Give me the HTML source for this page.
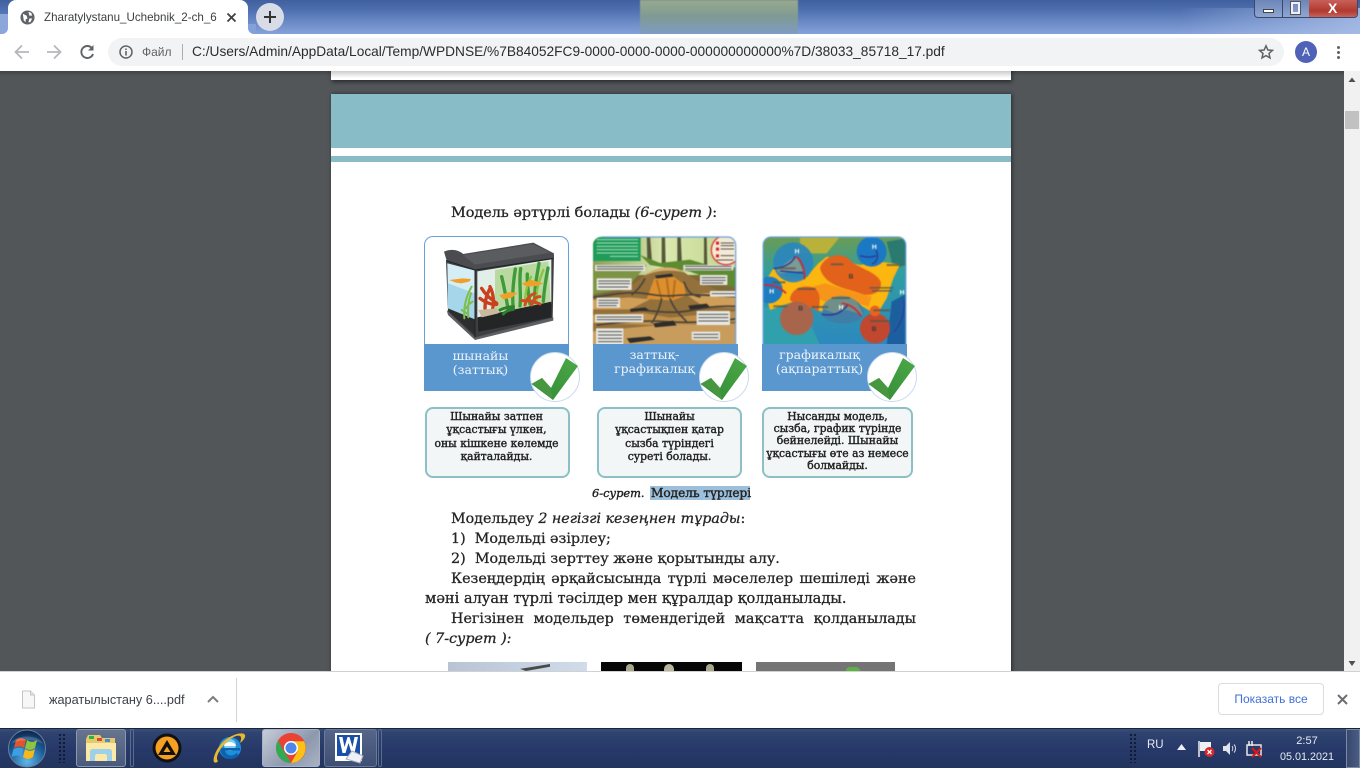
<!DOCTYPE html>
<html><head><meta charset="utf-8"><style>
html,body{margin:0;padding:0;width:1360px;height:768px;overflow:hidden;background:#525659}
*{box-sizing:border-box}
.a{position:absolute}
.b{font-family:"DejaVu Serif","Liberation Serif",serif;font-size:10.800px;color:#222;text-align:center;white-space:nowrap;position:absolute;line-height:12.200px;-webkit-text-stroke:.4px #222;filter:blur(.25px)}
.c{font-family:"DejaVu Serif","Liberation Serif",serif;font-size:12.500px;color:#eef4fa;text-align:center;position:absolute;line-height:14px;white-space:nowrap;filter:blur(.25px)}
.l{font-family:"DejaVu Serif","Liberation Serif",serif;font-size:14.300px;color:#252525;position:absolute;white-space:nowrap;line-height:18px;-webkit-text-stroke:.3px #252525;filter:blur(.25px)}
.u{font-family:"Liberation Sans",sans-serif;position:absolute;white-space:nowrap}
.box{position:absolute;background:#f3f6f6;border:2px solid #8bc0c6;border-radius:8px}
i{font-style:italic}
</style></head><body>
<!-- Frame -->
<div class="a" style="left:0;top:0;width:1360px;height:34px;background:linear-gradient(180deg,#3f5f9e 0,#4f70b0 30%,#86a2da 100%)"></div>
<div class="a" style="left:1180px;top:8px;width:180px;height:26px;background:linear-gradient(90deg,rgba(168,189,230,0),rgba(172,192,232,.8));"></div>
<div class="a" style="left:0;top:14px;width:12px;height:20px;background:#8aa6da"></div>
<div class="a" style="left:640px;top:0;width:158px;height:34px;background:linear-gradient(180deg,#97a98c 0,#7f9a94 50%,#7f9cc4 100%);filter:blur(.6px)"></div>
<!-- window buttons -->
<div class="a" style="left:1254px;top:0;width:104px;height:18px;border:1px solid #39496b;border-top:0;border-radius:0 0 4px 4px;background:linear-gradient(180deg,#6c86b8,#8fa6d2);overflow:hidden">
<div class="a" style="left:27px;top:0;width:1px;height:18px;background:#39496b"></div>
<div class="a" style="left:54px;top:0;width:49px;height:18px;background:linear-gradient(180deg,#c8605a,#b03a30 60%,#c96a60)"></div>
<div class="a" style="left:8px;top:9px;width:11px;height:4px;background:#fff;border:1px solid #444"></div>
<div class="a" style="left:36px;top:2px;width:9px;height:12px;background:none;border:2px solid #eef;outline:1px solid #555"></div>
<div class="u" style="left:73px;top:-1px;font-size:14px;font-weight:bold;color:#fff;line-height:18px">X</div>
</div>
<!-- Tab -->
<div class="a" style="left:2px;top:28px;width:252px;height:6px;background:#fff"></div>
<div class="a" style="left:0;top:24px;width:8px;height:10px;background:#8aa6da;border-radius:0 0 6px 0"></div>
<div class="a" style="left:248px;top:24px;width:8px;height:10px;background:#84a0d8;border-radius:0 0 0 6px"></div>
<div class="a" style="left:8px;top:0;width:240px;height:34px;background:#fff;border-radius:8px 8px 0 0"></div>
<svg class="a" style="left:20px;top:10px" width="15" height="15" viewBox="0 0 16 16"><circle cx="8" cy="8" r="7.500" fill="#5f6368"/><path d="M3 4l4 2 1 3-2 1 0 3-2-2zM9 2l3 1 1 3-3 0zM10 9l3 0-2 4-2 0z" fill="#fff"/></svg>
<div class="u" style="left:44px;top:10px;font-size:11.600px;color:#3c4043;line-height:15px;width:174px;overflow:hidden">Zharatylystanu_Uchebnik_2-ch_6</div>
<svg class="a" style="left:226px;top:12px" width="11" height="11" viewBox="0 0 11 11"><path d="M1.500 1.500l8 8M9.500 1.500l-8 8" stroke="#3c4043" stroke-width="1.800"/></svg>
<div class="a" style="left:256px;top:3px;width:28px;height:28px;border-radius:14px;background:#d7dce6"></div>
<svg class="a" style="left:263px;top:10px" width="14" height="14" viewBox="0 0 14 14"><path d="M7 1v12M1 7h12" stroke="#333" stroke-width="2"/></svg>
<!-- Toolbar -->
<div class="a" style="left:0;top:34px;width:1360px;height:37px;background:#fff"></div>
<svg class="a" style="left:13px;top:43px" width="90" height="18" viewBox="0 0 90 18"><path d="M16 9H3M9 2.500L2.500 9 9 15.500" stroke="#b5b7ba" stroke-width="1.800" fill="none"/><path d="M34 9h13M41 2.500L47.500 9 41 15.500" stroke="#b5b7ba" stroke-width="1.800" fill="none"/><path d="M79 5.200A6 6 0 1 0 80 11" stroke="#5f6368" stroke-width="1.900" fill="none"/><path d="M80.500 2v5.500H75z" fill="#5f6368"/></svg>
<div class="a" style="left:108px;top:38px;width:1176px;height:28px;border-radius:14px;background:#f1f3f4"></div>
<svg class="a" style="left:119px;top:45px" width="14" height="14" viewBox="0 0 14 14"><circle cx="7" cy="7" r="6" fill="none" stroke="#5f6368" stroke-width="1.500"/><path d="M7 6v4.500M7 3.500v1.500" stroke="#5f6368" stroke-width="1.600"/></svg>
<div class="u" style="left:142px;top:45px;font-size:12px;color:#5f6368;line-height:15px">Файл</div>
<div class="a" style="left:182px;top:44px;width:1px;height:16px;background:#aaadb0"></div>
<div class="u" style="left:192px;top:44px;font-size:13.720px;color:#2a2c2e;line-height:16px">C:/Users/Admin/AppData/Local/Temp/WPDNSE/%7B84052FC9-0000-0000-0000-000000000000%7D/38033_85718_17.pdf</div>
<svg class="a" style="left:1258px;top:44px" width="16" height="16" viewBox="0 0 16 16"><path d="M8 1.800l1.900 4.200 4.500.4-3.400 3 1 4.500L8 11.600l-4 2.300 1-4.500-3.400-3 4.500-.4z" fill="none" stroke="#5f6368" stroke-width="1.500"/></svg>
<div class="a" style="left:1295px;top:41px;width:22px;height:22px;border-radius:11px;background:#5062b8"></div>
<div class="u" style="left:1295px;top:45px;width:22px;text-align:center;font-size:12px;color:#fff;line-height:14px">A</div>
<div class="a" style="left:1337px;top:46px;width:3px;height:3px;border-radius:2px;background:#5f6368;box-shadow:0 5px 0 #5f6368,0 10px 0 #5f6368"></div>
<!-- Viewer -->
<div class="a" style="left:0;top:71px;width:1344px;height:600px;background:#525659;overflow:hidden">
<div class="a" style="left:0;top:0;width:1344px;height:5px;background:linear-gradient(180deg,rgba(0,0,0,.22),rgba(0,0,0,0))"></div>
<div class="a" style="left:331px;top:-10px;width:680px;height:19px;background:#fff;box-shadow:1px 2px 4px rgba(0,0,0,.5)"></div>
<div class="a" style="left:331px;top:23px;width:680px;height:700px;background:#fff;box-shadow:1px 0 4px rgba(0,0,0,.5)"></div>
</div>
<div class="a" style="left:331px;top:71px;width:680px;height:7px;background:linear-gradient(180deg,#ccc,#fff)"></div>
<div class="a" style="left:331px;top:94px;width:680px;height:54px;background:#88bcc6"></div>
<div class="a" style="left:331px;top:156px;width:680px;height:6px;background:#88bcc6"></div>
<!-- Scrollbar -->
<div class="a" style="left:1344px;top:71px;width:16px;height:600px;background:#f1f1f1"></div>
<svg class="a" style="left:1344px;top:71px" width="16" height="600"><path d="M4.500 11L8 6.500 11.500 11z" fill="#505050"/><path d="M4.500 590L8 595 11.500 590z" fill="#505050"/></svg>
<div class="a" style="left:1345px;top:111px;width:14px;height:18px;background:#c1c1c1"></div>

<!-- Page text -->
<div class="l" style="left:451px;top:204px;font-size:14.400px">Модель әртүрлі болады <i>(6-сурет )</i>:</div>

<!-- Card 1 -->
<div class="a" style="left:424px;top:236px;width:145px;height:155px;border:1.500px solid #6aa0d8;border-bottom:0;border-radius:9px 9px 0 0;background:#fff;overflow:hidden"></div>
<svg class="a" style="left:420px;top:230px;filter:blur(.35px)" width="250" height="180" viewBox="0 0 750 540">
<path d="M78 90L84 245 165 328 398 265 402 75z" fill="#3d3f43"/>
<path d="M82 100L165 122 165 272 84 238z" fill="#a6d6ea"/>
<path d="M82 100L165 122 165 190 84 160z" fill="#d5edf5"/>
<path d="M84 235L165 268 165 315 86 245z" fill="#2c2d2f"/>
<path d="M172 124L394 88 394 222 172 306z" fill="#e2efe8"/>
<path d="M225 120L385 94 392 215 225 252z" fill="#b9d9a0"/>
<path d="M172 262L394 215 394 262 172 306z" fill="#242526"/>
<g fill="none" stroke-linecap="round">
<path d="M280 235c-5-40 0-80 6-118M300 228c4-40-4-70 2-112M265 240c-6-30-10-60-20-100M345 218c-3-40 4-70 12-118M370 214c2-30 6-60 14-100M330 222c-4-30-10-60-8-90" stroke="#3f9a3a" stroke-width="10"/>
<path d="M350 210c-2-30 8-60 20-90M315 225c0-30 5-60 18-85" stroke="#8ac53e" stroke-width="7"/>
<path d="M185 175c12 20 25 30 45 45M195 235c0-25 5-40 15-60M180 205c14 10 30 20 50 18M210 170c10 20 15 50 5 75" stroke="#c8401e" stroke-width="10"/>
<path d="M315 225c5-20 15-30 30-35M335 225c5-15 10-25 25-25M305 212c15 0 35 0 55 10" stroke="#d24c20" stroke-width="9"/>
<path d="M133 265c-2-25 2-60 22-95M145 262c-2-22 0-50 8-72M125 240c6 4 14 8 20 14M158 215c-8 4-14 10-20 20" stroke="#7fbe4a" stroke-width="6"/>
<path d="M240 240c10-6 20-8 40-10M250 252c6-8 16-12 30-14" stroke="#2f7f2e" stroke-width="9"/>
</g>
<path d="M175 240l55-5 5 15-50 12z" fill="#c9ba9e"/>
<path d="M88 150l40-5 25 2-5 8-25 5-15-2zM238 196l30-10 25 3-18 14-25 5zM305 160l30-10 35 10-20 8-30 2z" fill="#f0a026"/>
<path d="M72 65C95 55 115 60 130 72 190 62 280 48 340 38L402 70 400 85 165 120 80 92z" fill="#4a4c50"/>
<path d="M130 76C190 66 280 52 338 42L392 68 165 104z" fill="#5a5c60"/>
<path d="M80 240L165 322 400 262 400 272 165 330 84 255z" fill="#5d5f63"/>
<path d="M165 120V322M80 92l85 28 235-35" stroke="#222" stroke-width="3" fill="none"/>
</svg>
<div class="a" style="left:424px;top:344px;width:145px;height:47px;background:#5b97cf"></div>
<div class="c" style="left:424px;top:349px;width:113px">шынайы<br>(заттық)</div>

<!-- Card 2 -->
<svg class="a" style="left:590px;top:235px;filter:blur(.4px)" width="150" height="112" viewBox="0 0 450 336">
<defs><clipPath id="k2"><path d="M9 30a24 24 0 0 1 24-24h381a24 24 0 0 1 24 24v300H9z"/></clipPath>
<linearGradient id="gr" x1="0" y1="0" x2="1" y2="0"><stop offset="0" stop-color="#8b9a55"/><stop offset=".5" stop-color="#dbe8b0"/><stop offset="1" stop-color="#bcd488"/></linearGradient></defs>
<g clip-path="url(#k2)">
<rect width="450" height="336" fill="#7e6a38"/>
<rect width="450" height="120" fill="url(#gr)"/>
<path d="M170 0h10l6 80h-14zM215 0h10l2 90h-12zM262 0h10l4 90h-14zM342 0h8l2 100h-10z" fill="#55593a"/>
<path d="M150 60l60 24 90-10 100 30 50-10v70L300 110 180 90z" fill="#5e8a30"/>
<path d="M0 90h170l-60 70-110 20z" fill="#7d9444"/>
<rect x="0" y="0" width="152" height="78" fill="#1f9c58"/>
<path d="M20 14h124M20 24h124M20 34h124M20 44h124M20 54h124M60 64h84" stroke="#a8dcc0" stroke-width="3"/>
<path d="M0 210C60 190 120 160 165 120 200 95 250 90 280 110 320 140 380 170 450 185V336H0z" fill="#94703a"/>
<path d="M165 122C195 92 255 90 282 112 250 104 200 104 165 122z" fill="#d6ae70"/>
<path d="M170 192l22-60 60-6 30 22 6 34-40 14z" fill="#dd8f2e"/>
<path d="M200 135l14 55M230 130l8 60M255 135l-6 55" stroke="#b3701f" stroke-width="6"/>
<path d="M0 195l120-8 60 6-60 30H0zM290 180l100-10 60 20v30l-110-6z" fill="#cf9e58"/>
<path d="M0 240l160-6 80 14 210-20v30l-210 14-240-8z" fill="#c0904c"/>
<path d="M0 290l210-20 240-4v70H0z" fill="#c79c5c"/>
<path d="M0 188c60-8 110-18 150-14 30 2 60 12 100 8 60-6 120 0 200 4M130 225c60 0 110 15 180 0 50-10 90-14 140-10M20 270c80-10 150-15 210-10 70 5 150 0 220-10M165 130c-15 30-30 40-40 50M282 140c10 30 20 40 50 46M215 190c-5 30-20 60-30 75M240 190c10 30 30 50 50 70" stroke="#4a4438" stroke-width="5" fill="none"/>
<path d="M120 222l45-5 12 8-55 6zM295 212l55-6 10 10-60 8zM190 265l60-8 10 14-65 6zM110 310l70-6 15 10-75 10zM195 122l50-6 5 8-50 6z" fill="#2e2d2a"/>
<g fill="#e8e8e2"><rect x="15" y="90" width="150" height="18"/><rect x="280" y="90" width="150" height="16"/><rect x="20" y="130" width="105" height="35"/><rect x="330" y="120" width="82" height="30"/><rect x="360" y="168" width="80" height="17"/><rect x="20" y="188" width="70" height="30"/><rect x="320" y="228" width="100" height="42"/><rect x="15" y="238" width="145" height="24"/><rect x="305" y="290" width="85" height="25"/><rect x="18" y="280" width="82" height="50"/></g>
<g stroke="#555" stroke-width="3"><path d="M20 95h140M20 102h140M285 94h140M285 102h140M25 138h95M25 146h95M25 156h90M335 128h72M335 136h72M335 144h65M365 176h70M25 196h60M25 204h60M25 212h55M325 238h90M325 248h90M325 258h90M20 246h135M20 254h135M310 298h75M310 308h75M24 290h72M24 300h72M24 310h72M24 320h72"/></g>
<circle cx="408" cy="45" r="44" fill="#f4e9d4" stroke="#de3a3a" stroke-width="4"/>
<path d="M378 20h9v9h-9zM378 38h9v9h-9zM378 58h9v9h-9z" fill="#d82020"/>
<path d="M392 24h40M392 32h40M392 42h40M392 62h40M380 75h50" stroke="#555" stroke-width="3"/>
</g>
<path d="M437 330V30a24 24 0 0 0-24-24H33" fill="none" stroke="#6aa0d8" stroke-width="3.500"/>
</svg>
<div class="a" style="left:593px;top:344px;width:145px;height:47px;background:#5b97cf"></div>
<div class="c" style="left:593px;top:348px;width:123px">заттық-<br>графикалық</div>

<!-- Card 3 -->
<svg class="a" style="left:760px;top:235px;filter:blur(.4px)" width="150" height="112" viewBox="0 0 450 336">
<defs><clipPath id="k3"><path d="M8 30a24 24 0 0 1 24-24h382a24 24 0 0 1 24 24v300H8z"/></clipPath>
<linearGradient id="bg3" x1="0" y1="0" x2="0" y2="1"><stop offset="0" stop-color="#6e9c4e"/><stop offset=".35" stop-color="#2f9ea2"/><stop offset="1" stop-color="#2d88c0"/></linearGradient></defs>
<g clip-path="url(#k3)">
<rect width="450" height="336" fill="url(#bg3)"/>
<path d="M120 5h120l-40 50h-80z" fill="#b8b23a"/>
<path d="M0 220l120-20 60 130H0z" fill="#30a0ac"/>
<path d="M395 200l55-30v160h-70z" fill="#1c5f9e"/>
<path d="M380 20l60-10v80l-40 10z" fill="#2a7a70"/>
<path d="M10 150L40 100 80 125 135 130 175 85 200 65 300 90 360 80 420 88 400 130 380 190 350 240 300 210 240 245 170 225 120 195 70 210 30 225z" fill="#fbb60f"/>
<path d="M120 165l75-20 100 30 40 10-10 30-60-20-40 20-60-30z" fill="#f7941a"/>
<circle cx="100" cy="82" r="60" fill="#2b87bb" opacity=".95"/>
<path d="M50 105L108 62 130 108 60 115z" fill="#7f9a92"/>
<circle cx="335" cy="50" r="45" fill="#1b78c2"/>
<path d="M180 100C190 65 240 45 270 75 290 98 350 110 362 140 368 170 335 188 300 175 262 160 195 155 180 100z" fill="#e2621c"/>
<path d="M90 195C92 160 130 148 160 158 182 168 182 195 175 230 150 210 110 215 90 195z" fill="#e2621c"/>
<circle cx="110" cy="250" r="50" fill="#a8654c"/>
<path d="M185 235C195 190 245 175 275 190 305 205 315 225 310 240 300 270 205 280 185 235z" fill="#3f7ea6"/>
<path d="M185 220C200 180 260 170 290 200L310 240 260 225 225 235z" fill="#6f9088"/>
<circle cx="345" cy="280" r="45" fill="#c2472f"/>
<circle cx="345" cy="228" r="16" fill="#e8641e"/>
<circle cx="28" cy="165" r="40" fill="#1f7cc0"/>
<path d="M8 150c30-2 55 8 70 25" stroke="#d8262a" stroke-width="5" fill="none"/>
<path d="M105 65c20 5 30 40 28 68" stroke="#d8262a" stroke-width="5" fill="none"/>
<path d="M40 100c25 0 55-12 65-35M60 108l70 6" stroke="#2a3f9a" stroke-width="4.500" fill="none"/>
<path d="M300 62c20 6 35 6 48 0M348 45c8 18 5 36-12 42" stroke="#2a3f9a" stroke-width="4.500" fill="none"/>
<path d="M185 238c35 6 58-2 78-28" stroke="#2a3f9a" stroke-width="5" fill="none"/>
<path d="M245 205c28 2 48 22 58 38" stroke="#d8262a" stroke-width="5" fill="none"/>
<path d="M432 195c4 40-8 70-30 95" stroke="#2a3f9a" stroke-width="4" fill="none"/>
<g font-family="Liberation Sans,sans-serif" font-size="20" fill="#fff" text-anchor="middle" font-weight="bold"><text x="111" y="56">Н</text><text x="343" y="42">Н</text><text x="273" y="130" fill="#3a3a3a">В</text><text x="122" y="226" fill="#3a3a3a">В</text><text x="243" y="224">Н</text><text x="35" y="175">Н</text><text x="426" y="178">Н</text><text x="342" y="288" fill="#3a3a3a">В</text></g>
<g fill="#5a5648" opacity=".75"><rect x="52" y="97" width="55" height="6"/><rect x="38" y="139" width="38" height="6"/><rect x="112" y="159" width="55" height="6"/><rect x="40" y="211" width="42" height="6"/><rect x="155" y="213" width="50" height="6"/><rect x="215" y="186" width="55" height="6"/><rect x="212" y="85" width="38" height="6"/><rect x="380" y="87" width="42" height="6"/><rect x="328" y="156" width="72" height="5"/><rect x="335" y="165" width="62" height="5"/><rect x="340" y="223" width="50" height="6"/><rect x="330" y="255" width="62" height="6"/></g>
</g>
<path d="M9.500 330V30a24 24 0 0 1 24-24h380a24 24 0 0 1 24 24v300" fill="none" stroke="#6aa0d8" stroke-width="3.500"/>
</svg>
<div class="a" style="left:762px;top:344px;width:145px;height:47px;background:#5b97cf"></div>
<div class="c" style="left:762px;top:348px;width:115px">графикалық<br>(ақпараттық)</div>

<!-- Check badges -->
<svg class="a" style="left:529px;top:351px" width="52" height="52" viewBox="0 0 52 52"><defs><linearGradient id="ck" x1="0" y1="1" x2="1" y2="0"><stop offset="0" stop-color="#2f8a35"/><stop offset="1" stop-color="#4ca846"/></linearGradient></defs><circle cx="26" cy="26" r="24.500" fill="#fff" stroke="#c7daee" stroke-width="1"/><path d="M2.500 33L13 27 22 37 37 7 49 15 24 49z" fill="url(#ck)"/><path d="M2.500 33L10 37 24 49 22 37 13 27z" fill="#2c7d31"/><path d="M13 27L22 37 24 49 10 37 2.500 33z" fill="#5fb24f" opacity=".5"/></svg>
<svg class="a" style="left:698px;top:351px" width="52" height="52" viewBox="0 0 52 52"><circle cx="26" cy="26" r="24.500" fill="#fff" stroke="#c7daee" stroke-width="1"/><path d="M2.500 33L13 27 22 37 37 7 49 15 24 49z" fill="url(#ck)"/><path d="M2.500 33L10 37 24 49 22 37 13 27z" fill="#2c7d31"/><path d="M13 27L22 37 24 49 10 37 2.500 33z" fill="#5fb24f" opacity=".5"/></svg>
<svg class="a" style="left:866px;top:351px" width="52" height="52" viewBox="0 0 52 52"><circle cx="26" cy="26" r="24.500" fill="#fff" stroke="#c7daee" stroke-width="1"/><path d="M2.500 33L13 27 22 37 37 7 49 15 24 49z" fill="url(#ck)"/><path d="M2.500 33L10 37 24 49 22 37 13 27z" fill="#2c7d31"/><path d="M13 27L22 37 24 49 10 37 2.500 33z" fill="#5fb24f" opacity=".5"/></svg>

<!-- Boxes -->
<div class="box" style="left:425px;top:407px;width:145px;height:71px"></div>
<div class="b" style="left:424px;top:410px;width:145px;line-height:13.300px">Шынайы затпен<br>ұқсастығы үлкен,<br>оны кішкене көлемде<br>қайталайды.</div>
<div class="box" style="left:597px;top:407px;width:145px;height:71px"></div>
<div class="b" style="left:597px;top:410px;width:145px;line-height:13.300px">Шынайы<br>ұқсастықпен қатар<br>сызба түріндегі<br>суреті болады.</div>
<div class="box" style="left:762px;top:407px;width:151px;height:71px"></div>
<div class="b" style="left:762px;top:411px;width:151px">Нысанды модель,<br>сызба, график түрінде<br>бейнелейді. Шынайы<br>ұқсастығы өте аз немесе<br>болмайды.</div>

<!-- Caption -->
<div class="a" style="left:650px;top:486px;width:100px;height:14px;background:#9cc0dc"></div>
<div class="b" style="left:592px;top:486px;text-align:left;line-height:14px;font-size:11.400px"><i>6-сурет</i>.</div>
<div class="b" style="left:651px;top:486px;text-align:left;line-height:14px;font-size:12.100px">Модель түрлері</div>

<!-- Body -->
<div class="l" style="left:451px;top:510px;font-size:14.250px">Модельдеу <i>2 негізгі кезеңнен тұрады</i>:</div>
<div class="l" style="left:451px;top:530px">1)&nbsp; Модельді әзірлеу;</div>
<div class="l" style="left:451px;top:550px;font-size:14.350px">2)&nbsp; Модельді зерттеу және қорытынды алу.</div>
<div class="l" style="left:451px;top:570px;width:465px;text-align:justify;text-align-last:justify">Кезеңдердің әрқайсысында түрлі мәселелер шешіледі және</div>
<div class="l" style="left:425px;top:590px;font-size:14.550px">мәні алуан түрлі тәсілдер мен құралдар қолданылады.</div>
<div class="l" style="left:451px;top:610px;width:465px;text-align:justify;text-align-last:justify">Негізінен модельдер төмендегідей мақсатта қолданылады</div>
<div class="l" style="left:425px;top:630px"><i>( 7-сурет ):</i></div>

<!-- Bottom images -->
<div class="a" style="left:448px;top:662px;width:139px;height:9px;background:linear-gradient(90deg,#b8c4d4,#d0dcea)"></div>
<div class="a" style="left:520px;top:664px;width:30px;height:7px;background:#4a4a4a;clip-path:polygon(0 70%,100% 0,100% 40%,20% 100%)"></div>
<div class="a" style="left:601px;top:662px;width:141px;height:9px;background:#060606"></div>
<div class="a" style="left:626px;top:664px;width:8px;height:7px;border-radius:4px 4px 0 0;background:#a8a68c"></div>
<div class="a" style="left:664px;top:664px;width:10px;height:7px;border-radius:5px 5px 0 0;background:#b8b69c"></div>
<div class="a" style="left:706px;top:664px;width:8px;height:7px;border-radius:4px 4px 0 0;background:#a8a68c"></div>
<div class="a" style="left:756px;top:662px;width:139px;height:9px;background:#747474"></div>
<div class="a" style="left:846px;top:667px;width:14px;height:4px;border-radius:7px 7px 0 0;background:#5db044"></div>

<!-- Download bar -->
<div class="a" style="left:0;top:671px;width:1360px;height:57px;background:#fff;border-top:1px solid #d0d1d3"></div>
<svg class="a" style="left:21px;top:690px" width="15" height="19" viewBox="0 0 15 19"><path d="M1.500 1h8l4 4v13h-12z" fill="#f7f7f7" stroke="#c4c4c4"/><path d="M9.500 1v4h4" fill="#e4e4e4" stroke="#c4c4c4"/></svg>
<div class="u" style="left:49px;top:692px;font-size:12.700px;color:#3c4048;line-height:16px">жаратылыстану 6....pdf</div>
<svg class="a" style="left:207px;top:695px" width="12" height="9" viewBox="0 0 12 9"><path d="M1 7l5-5 5 5" stroke="#7a7d80" stroke-width="2" fill="none"/></svg>
<div class="a" style="left:236px;top:678px;width:1px;height:44px;background:#d4d4d4"></div>
<div class="a" style="left:1218px;top:683px;width:106px;height:32px;border:1px solid #dadce0;border-radius:4px;background:#fff"></div>
<div class="u" style="left:1218px;top:691px;width:106px;text-align:center;font-size:12px;color:#3f6fd8;line-height:16px">Показать все</div>
<svg class="a" style="left:1337px;top:694px" width="11" height="11" viewBox="0 0 11 11"><path d="M1 1l9 9M10 1l-9 9" stroke="#6b6e72" stroke-width="2"/></svg>

<!-- Taskbar -->
<div class="a" style="left:0;top:728px;width:1360px;height:40px;background:linear-gradient(180deg,#3c5178 0,#2f4470 8%,#27396a 50%,#22355e 100%);border-top:1px solid #18243e"></div>
<!-- Start -->
<svg class="a" style="left:7px;top:729px" width="40" height="39" viewBox="0 0 40 39"><defs><radialGradient id="orb" cx=".5" cy=".85" r=".8"><stop offset="0" stop-color="#5fb8e8"/><stop offset=".6" stop-color="#1d5f9a"/><stop offset="1" stop-color="#0e2a52"/></radialGradient></defs><circle cx="20" cy="19.500" r="18.500" fill="url(#orb)" stroke="#6c7f9a"/><path d="M9 11c4-3 7-2 10 0l-2 8c-3-2-6-2-10 0z" fill="#e2552a"/><path d="M20 11c3 2 6 3 10 0l-2 8c-4 3-7 2-10 0z" fill="#8cc63f"/><path d="M6.500 20c4-2 7-2 10 0l-2 8c-3-2-6-2-10 0z" fill="#3d9fe0"/><path d="M18 20c3 2 6 3 10 0l-2 8c-4 3-7 2-10 0z" fill="#f7b81a"/><path d="M4 15C8 5 32 5 36 15 28 10 12 10 4 15z" fill="#fff" opacity=".18"/></svg>
<div class="a" style="left:58px;top:733px;width:8px;height:30px;background-image:radial-gradient(circle,#0f1a30 1px,transparent 1.200px);background-size:4px 4px"></div>
<!-- Buttons -->
<div class="a" style="left:76px;top:729px;width:50px;height:38px;border:1px solid #8c97ac;border-radius:3px;background:linear-gradient(180deg,#66748f,#495a7c)"></div>
<svg class="a" style="left:84px;top:733px" width="34" height="30" viewBox="0 0 34 30"><path d="M2 6l2-4h12l2 3h13v22H2z" fill="#e8c96a"/><path d="M2 10h30v18H2z" fill="#fbe9a8"/><rect x="5" y="3" width="5" height="3" fill="#2fb04a"/><rect x="13" y="5" width="5" height="3" fill="#d84a3a"/><rect x="21" y="6" width="5" height="3" fill="#3f8fd8"/><path d="M6 28V19c0-2 1-3 3-3h16c2 0 3 1 3 3v9h-5v-5c0-1-1-2-2-2h-8c-1 0-2 1-2 2v5z" fill="#9ed0ea"/></svg>
<div class="a" style="left:130px;top:729px;width:4px;height:38px;border:1px solid #5c6c8c;border-radius:2px"></div>
<svg class="a" style="left:152px;top:733px" width="30" height="30" viewBox="0 0 30 30"><circle cx="15" cy="15" r="14.500" fill="#111"/><circle cx="15" cy="15" r="11.500" fill="#f5a020"/><path d="M15 7L24 22H6z" fill="#111"/><path d="M15 13.500L18.500 19h-7z" fill="#f5a020"/></svg>
<svg class="a" style="left:212px;top:732px" width="34" height="32" viewBox="0 0 34 32"><circle cx="18" cy="16" r="11" fill="#1f8fd8"/><circle cx="18" cy="13" r="6" fill="#7fd0f0"/><path d="M8 16h20v2.500H13c.5 3 3 5 6 5 2 0 4-1 5.500-2.500l2.500 2c-2 2.500-5 4-8 4-6 0-11-5-11-11z" fill="#0d62b0"/><path d="M12 14c1-3 4-4 6-4s5 1 6 4z" fill="#fff"/><path d="M2 30C0 26 6 12 16 6 24 1 32 0 33 3c1 2-2 6-5 8 1-3 2-6 0-7C24 2 14 9 8 18 5 23 4 27 6 29c-1 2-3 2-4 1z" fill="#e8b830"/></svg>
<div class="a" style="left:262px;top:729px;width:58px;height:38px;border:1px solid #aab2c2;border-radius:3px;background:linear-gradient(135deg,#c6ccd8,#8d98ae 60%,#a9b2c4)"></div>
<svg class="a" style="left:276px;top:733px" width="30" height="30" viewBox="0 0 30 30"><circle cx="15" cy="15" r="15" fill="#ea4335"/><path d="M2 7.500L8.500 18.800 15 30a15 15 0 0 1-13-22.500z" fill="#34a853"/><path d="M15 8.200H28A15 15 0 0 1 15 30l6.500-11.200z" fill="#fbc116"/><path d="M2 7.500L8.500 18.800A7 7 0 0 1 15 8.200z" fill="#ea4335"/><circle cx="15" cy="15" r="7" fill="#fff"/><circle cx="15" cy="15" r="5.500" fill="#4f86ec"/></svg>
<div class="a" style="left:324px;top:729px;width:53px;height:38px;border:1px solid #6c7a96;border-radius:3px;background:linear-gradient(180deg,#56668a,#3e4f74)"></div>
<svg class="a" style="left:334px;top:732px" width="32" height="32" viewBox="0 0 32 32"><rect x="1" y="1" width="27" height="28" fill="#fff"/><rect x="3" y="3" width="23" height="21" fill="#1a4fa8"/><path d="M5 5l3.500 16h3l3-10 3 10h3L24 5h-3.500l-2 10L15.500 5h-2l-3 10-2-10z" fill="#fff"/><path d="M18 19l11 5-3 7-14-4z" fill="#eef1f6" stroke="#aab"/></svg>
<div class="a" style="left:378px;top:729px;width:4px;height:38px;border:1px solid #5c6c8c;border-radius:2px"></div>
<!-- Tray -->
<div class="a" style="left:1129px;top:733px;width:8px;height:30px;background-image:radial-gradient(circle,#0f1a30 1px,transparent 1.200px);background-size:4px 4px"></div>
<div class="u" style="left:1147px;top:738px;font-size:11.500px;color:#e6ebf2;line-height:15px">RU</div>
<svg class="a" style="left:1177px;top:744px" width="9" height="6" viewBox="0 0 9 6"><path d="M4.500 0L9 6H0z" fill="#eef"/></svg>
<svg class="a" style="left:1198px;top:740px" width="17" height="18" viewBox="0 0 17 18"><path d="M1 1v16" stroke="#eee" stroke-width="1.500"/><path d="M2 2h11v9H2z" fill="#eef1f4"/><circle cx="11.500" cy="12" r="5" fill="#d8262a"/><path d="M9.500 10l4 4M13.500 10l-4 4" stroke="#fff" stroke-width="1.300"/></svg>
<svg class="a" style="left:1222px;top:741px" width="16" height="15" viewBox="0 0 16 15"><path d="M1 5h3l4-4v13l-4-4H1z" fill="#dfe4ea"/><path d="M10 5c1 1 1 4 0 5M12 3.500c2 2 2 6 0 8" stroke="#cfd6e0" fill="none" stroke-width="1"/></svg>
<svg class="a" style="left:1246px;top:740px" width="17" height="18" viewBox="0 0 17 18"><rect x="1" y="5" width="14" height="10" fill="none" stroke="#e6e6e6" stroke-width="1.500"/><path d="M3 1v5M6 1v5" stroke="#eee" stroke-width="1.500"/><path d="M6 8l9 9M15 8l-9 9" stroke="#e01818" stroke-width="2"/></svg>
<div class="u" style="left:1280px;top:734px;width:54px;text-align:center;font-size:11px;color:#e6ebf2;line-height:15px">2:57</div>
<div class="u" style="left:1276px;top:750px;width:62px;text-align:center;font-size:10.800px;color:#e6ebf2;line-height:15px">05.01.2021</div>
<div class="a" style="left:1346px;top:729px;width:14px;height:39px;border:1px solid #7c8aa4;background:linear-gradient(90deg,#37496f,#4a5c82)"></div>
</body></html>
